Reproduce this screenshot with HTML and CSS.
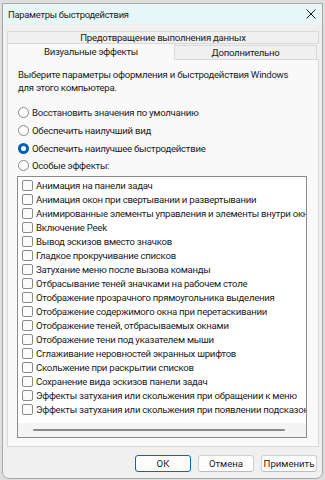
FILE: index.html
```html
<!DOCTYPE html>
<html lang="ru">
<head>
<meta charset="utf-8">
<title>Параметры быстродействия</title>
<link rel="stylesheet" href="styles.css">
</head>
<body>
<div class="window">
  <div class="titlebar">
    <span class="title">Параметры быстродействия</span>
    <svg class="close" width="10" height="10" viewBox="0 0 10 10"><path d="M0.5 0.5L9.5 9.5M9.5 0.5L0.5 9.5" stroke="#1a1a1a" stroke-width="1"/></svg>
  </div>
  <div class="content">
    <div class="tabs">
      <div class="tab tab-top">Предотвращение выполнения данных</div>
      <div class="tab-row">
        <div class="tab tab-sel">Визуальные эффекты</div>
        <div class="tab tab-other">Дополнительно</div>
      </div>
    </div>
    <div class="panel">
      <p class="desc">Выберите параметры оформления и быстродействия Windows для этого компьютера.</p>
      <div class="radios">
        <div class="radio"><span class="rdot"></span>Восстановить значения по умолчанию</div>
        <div class="radio"><span class="rdot"></span>Обеспечить наилучший вид</div>
        <div class="radio"><span class="rdot on"></span>Обеспечить наилучшее быстродействие</div>
        <div class="radio"><span class="rdot"></span>Особые эффекты:</div>
      </div>
      <div class="listbox">
        <ul class="items">
          <li><span class="cb"></span>Анимация на панели задач</li>
          <li><span class="cb"></span>Анимация окон при свертывании и развертывании</li>
          <li><span class="cb"></span>Анимированные элементы управления и элементы внутри окна</li>
          <li><span class="cb"></span>Включение Peek</li>
          <li><span class="cb"></span>Вывод эскизов вместо значков</li>
          <li><span class="cb"></span>Гладкое прокручивание списков</li>
          <li><span class="cb"></span>Затухание меню после вызова команды</li>
          <li><span class="cb"></span>Отбрасывание теней значками на рабочем столе</li>
          <li><span class="cb"></span>Отображение прозрачного прямоугольника выделения</li>
          <li><span class="cb"></span>Отображение содержимого окна при перетаскивании</li>
          <li><span class="cb"></span>Отображение теней, отбрасываемых окнами</li>
          <li><span class="cb"></span>Отображение тени под указателем мыши</li>
          <li><span class="cb"></span>Сглаживание неровностей экранных шрифтов</li>
          <li><span class="cb"></span>Скольжение при раскрытии списков</li>
          <li><span class="cb"></span>Сохранение вида эскизов панели задач</li>
          <li><span class="cb"></span>Эффекты затухания или скольжения при обращении к меню</li>
          <li><span class="cb"></span>Эффекты затухания или скольжения при появлении подсказок</li>
        </ul>
        <div class="hscroll"><div class="thumb"></div></div>
      </div>
    </div>
    <div class="buttons">
      <button class="btn default">ОК</button>
      <button class="btn">Отмена</button>
      <button class="btn">Применить</button>
    </div>
  </div>
</div>
</body>
</html>
```
FILE: styles.css
```css
* { box-sizing: border-box; }
html, body { margin: 0; padding: 0; }
body {
  background: #dedede;
  font-family: Roboto, "Liberation Sans", sans-serif;
  font-size: 9.6px;
  letter-spacing: -0.26px;
  color: #1b1b1b;
  height: 480px;
  overflow: hidden;
}
.window {
  margin: 3px 0 0 2px;
  width: 321px;
  height: 476px;
  border: 1px solid #a8a8a8;
  border-radius: 0 0 7px 7px;
  background: #f0f0f0;
  overflow: hidden;
}
.titlebar {
  height: 20px;
  background: #e7f6f6;
  display: flex;
  align-items: center;
  justify-content: space-between;
  padding: 0 5px 0 5px;
}
.title { font-size: 9.4px; color: #1b1b1b; }
.close { display: block; margin-right: 1px; }
.content { padding: 7px 3px 0 4px; }
.tabs { width: 312px; }
.tab {
  border: 1px solid #d9d9d9;
  background: #f0f0f0;
  text-align: center;
  line-height: 11px;
}
.tab-top { height: 13px; }
.tab-row { display: flex; align-items: flex-end; margin-top: -1px; }
.tab-sel {
  width: 168px;
  height: 17px;
  border-bottom: none;
  background: #f9f9f9;
  line-height: 15px;
  position: relative;
  z-index: 1;
  margin-bottom: -1px;
}
.tab-other {
  flex: 1;
  height: 14px;
  margin-right: 2px;
  border-left: none;
  border-bottom: none;
  line-height: 13px;
}
.panel {
  width: 312px;
  height: 388px;
  border: 1px solid #d9d9d9;
  background: #f9f9f9;
  padding: 8px 11px 0 10px;
}
.desc { margin: 0; line-height: 13px; width: 285px; }
.radios { margin-top: 10px; display: flex; flex-direction: column; }
.radio { display: flex; align-items: center; height: 17.7px; }
.rdot {
  width: 11px; height: 11px;
  border: 1px solid #8a8a8a;
  border-radius: 50%;
  background: #fdfdfd;
  margin-right: 3px;
  flex: none;
}
.rdot.on {
  border: 3px solid #005fb8;
  background: #ffffff;
}
.listbox {
  margin-top: 1px;
  margin-left: -1px;
  width: 290px;
  height: 262px;
  border: 1px solid #8c8c8c;
  background: #ffffff;
  display: flex;
  flex-direction: column;
  overflow: hidden;
}
.items {
  list-style: none;
  margin: 0;
  padding: 2px 0 0 4px;
  flex: 1;
  overflow: hidden;
}
.items li {
  height: 14px;
  display: flex;
  align-items: center;
  white-space: nowrap;
}
.cb {
  width: 11px; height: 11px;
  border: 1px solid #8a8a8a;
  border-radius: 2px;
  background: #fbfbfb;
  margin-right: 3px;
  flex: none;
}
.hscroll {
  height: 14px;
  background: #f4f4f4;
  display: flex;
  align-items: center;
  padding: 0 21px 0 15px;
}
.thumb { height: 2px; flex: 1; background: #8a8a8a; border-radius: 1px; }
.buttons {
  display: flex;
  justify-content: flex-end;
  gap: 7px;
  padding: 8px 2px 0 0;
}
.btn {
  font: inherit;
  color: #1b1b1b;
  width: 56px;
  height: 17px;
  padding: 0;
  border: 1px solid #d0d0d0;
  border-bottom-color: #bdbdbd;
  border-radius: 3px;
  background: #fdfdfd;
  line-height: 14px;
}
.btn.default { border: 1px solid #0067c0; }
```
